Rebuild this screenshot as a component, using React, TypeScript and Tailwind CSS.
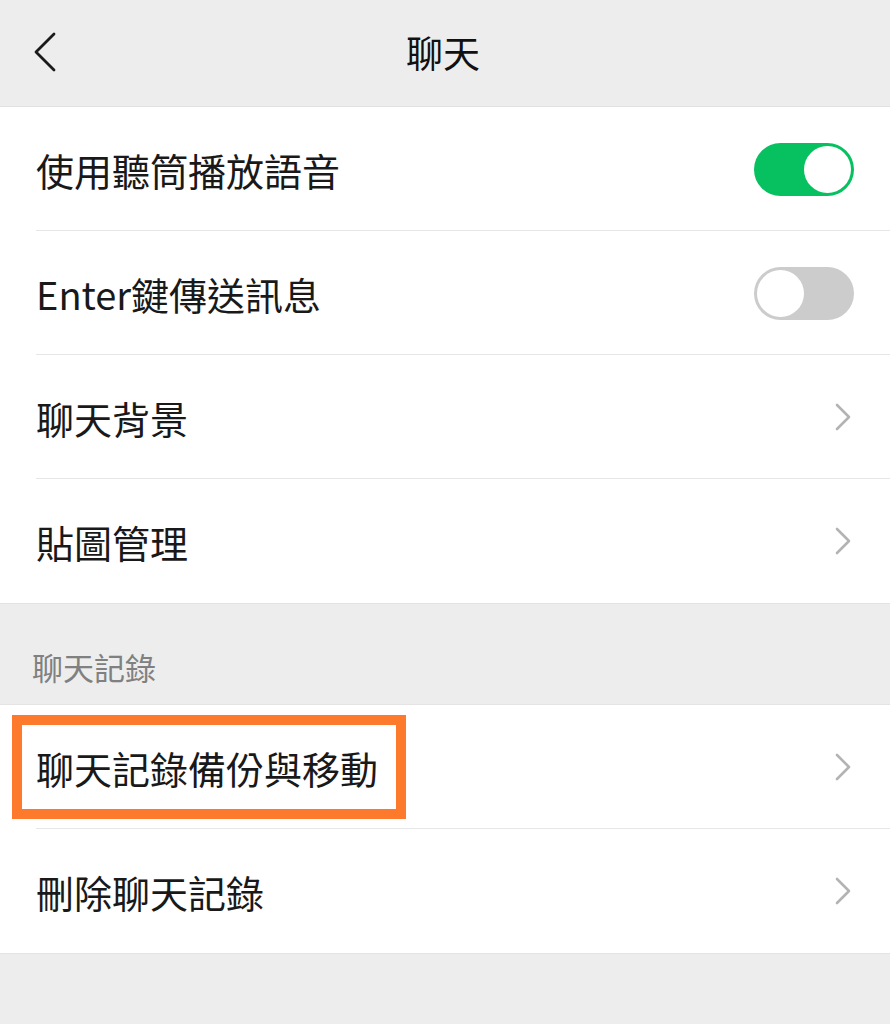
import React from 'react';

const font = { fontFamily: '"Noto Sans CJK TC", "Noto Sans", sans-serif' };

function Chevron() {
  return (
    <svg width="18" height="30" viewBox="0 0 18 30" className="mr-[38px]">
      <path d="M3 3 L15 15 L3 27" fill="none" stroke="#b3b3b3" strokeWidth="2.6" strokeLinecap="round" strokeLinejoin="round" />
    </svg>
  );
}

function Toggle({ on }: { on: boolean }) {
  return on ? (
    <div className="mr-[36px] flex h-[53px] w-[100px] items-center justify-end rounded-full bg-[#07c160] p-[3px]">
      <div className="h-[47px] w-[47px] rounded-full bg-white" />
    </div>
  ) : (
    <div className="mr-[36px] flex h-[53px] w-[100px] items-center justify-start rounded-full bg-[#cccccc] p-[3px]">
      <div className="h-[47px] w-[47px] rounded-full bg-white" />
    </div>
  );
}

function Row({ label, right, last }: { label: string; right: React.ReactNode; last?: boolean }) {
  return (
    <div className="relative flex h-[124px] items-center justify-between bg-white">
      <span className="pl-[36px] text-[38px] text-[#191919]">{label}</span>
      {right}
      {!last && <div className="absolute bottom-0 left-[36px] right-0 h-px bg-[#e6e6e6]" />}
    </div>
  );
}

export default function App() {
  return (
    <div className="flex h-[1024px] w-[890px] flex-col bg-[#ededed]" style={font}>
      <div className="relative flex h-[107px] items-center justify-center border-b border-[#e0e0e0] bg-[#ededed]">
        <svg width="28" height="42" viewBox="0 0 28 42" className="absolute left-[31px] top-[31px]">
          <path d="M23 3 L5 21 L23 39" fill="none" stroke="#1a1a1a" strokeWidth="2.8" strokeLinecap="round" strokeLinejoin="round" />
        </svg>
        <span className="pr-[4px] text-[37px] text-[#111111]">聊天</span>
      </div>

      <div className="flex flex-col">
        <Row label="使用聽筒播放語音" right={<Toggle on />} />
        <Row label="Enter鍵傳送訊息" right={<Toggle on={false} />} />
        <Row label="聊天背景" right={<Chevron />} />
        <Row label="貼圖管理" right={<Chevron />} last />
      </div>

      <div className="flex h-[102px] items-end border-y border-[#e3e3e3] pb-[14px] pl-[32px]">
        <span className="text-[31px] text-[#808080]">聊天記錄</span>
      </div>

      <div className="flex flex-col border-b border-[#e3e3e3]">
        <div className="relative">
          <Row label="聊天記錄備份與移動" right={<Chevron />} />
          <div className="absolute left-[12px] top-[10px] h-[104px] w-[394px] border-[10px] border-[#fd7a2c]" />
        </div>
        <Row label="刪除聊天記錄" right={<Chevron />} last />
      </div>
    </div>
  );
}
